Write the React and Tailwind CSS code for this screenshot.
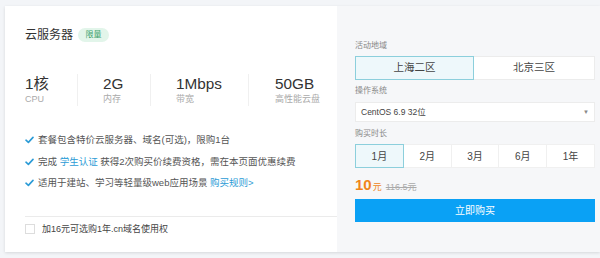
import React from "react";

const font = { fontFamily: '"Liberation Sans", "Noto Sans CJK SC", sans-serif' };

function Check() {
  return (
    <svg width="9" height="8" viewBox="0 0 9 8" className="shrink-0">
      <path d="M1 4.2 L3.4 6.4 L8 1.4" fill="none" stroke="#2b9bd6" strokeWidth="1.6" strokeLinecap="round" strokeLinejoin="round" />
    </svg>
  );
}

export default function App() {
  const months = ["1月", "2月", "3月", "6月", "1年"];
  return (
    <div className="w-[600px] h-[258px] bg-[#f3f5f8] pt-[6px] pl-[5px] overflow-hidden" style={font}>
      <div className="flex w-[595px] h-[246px] shadow-[0_1px_3px_rgba(0,0,0,0.12)]">
        {/* left */}
        <div className="w-[332px] bg-white flex flex-col pl-[20px]">
          <div className="flex items-center h-[20px] mt-[19px]">
            <span className="text-[12px] text-[#333] leading-[20px]">云服务器</span>
            <span className="ml-[5px] h-[14px] w-[31px] rounded-full bg-[#e2f5ea] text-[#3a9f69] text-[8px] flex items-center justify-center">限量</span>
          </div>
          <div className="flex mt-[29px] h-[32px]">
            <div className="w-[52px] flex flex-col">
              <span className="text-[15.3px] leading-[20px] text-[#333]">1核</span>
              <span className="text-[9px] leading-[14px] text-[#aaa] mt-[-2px]">CPU</span>
            </div>
            <div className="w-[73px] pl-[25px] border-l border-[#f0f0f0] flex flex-col">
              <span className="text-[15.3px] leading-[20px] text-[#333]">2G</span>
              <span className="text-[9px] leading-[14px] text-[#aaa] mt-[-2px]">内存</span>
            </div>
            <div className="w-[98px] pl-[25px] border-l border-[#f0f0f0] flex flex-col">
              <span className="text-[15.3px] leading-[20px] text-[#333]">1Mbps</span>
              <span className="text-[9px] leading-[14px] text-[#aaa] mt-[-2px]">带宽</span>
            </div>
            <div className="pl-[26px] border-l border-[#f0f0f0] flex flex-col">
              <span className="text-[15.3px] leading-[20px] text-[#333]">50GB</span>
              <span className="text-[9px] leading-[14px] text-[#aaa] mt-[-2px]">高性能云盘</span>
            </div>
          </div>
          <div className="flex flex-col mt-[27px] gap-[7.5px] text-[9.5px] leading-[14px] text-[#555]">
            <div className="flex items-center gap-[4px]">
              <Check />
              <span>套餐包含特价云服务器、域名(可选)，限购1台</span>
            </div>
            <div className="flex items-center gap-[4px]">
              <Check />
              <span>完成 <span className="text-[#2b9bd6]">学生认证</span> 获得2次购买价续费资格，需在本页面优惠续费</span>
            </div>
            <div className="flex items-center gap-[4px]">
              <Check />
              <span>适用于建站、学习等轻量级web应用场景 <span className="text-[#2b9bd6]">购买规则&gt;</span></span>
            </div>
          </div>
          <div className="mt-[26px] h-px bg-[#ebebeb]" />
          <div className="flex items-center mt-[5px] gap-[7px] h-[14px]">
            <span className="w-[10px] h-[10px] border border-[#ddd] bg-white" />
            <span className="text-[9px] text-[#444] leading-[14px]">加16元可选购1年.cn域名使用权</span>
          </div>
        </div>
        {/* right */}
        <div className="flex-1 bg-[#f6f7f9] pl-[18px] pr-[5px] flex flex-col">
          <div className="mt-[34px] text-[8px] leading-[12px] text-[#888]">活动地域</div>
          <div className="mt-[4px] flex h-[24px] bg-white text-[10.5px] text-[#444]">
            <div className="w-[119px] flex items-center justify-center bg-[#eef8fb] border border-[#8ccfdc]">上海二区</div>
            <div className="flex-1 flex items-center justify-center border border-l-0 border-[#ececec]">北京三区</div>
          </div>
          <div className="mt-[5px] text-[8px] leading-[12px] text-[#888]">操作系统</div>
          <div className="mt-[5px] h-[20px] bg-white border border-[#ececec] flex items-center justify-between pl-[5px] pr-[5px] text-[8.5px] text-[#444]">
            <span>CentOS 6.9 32位</span>
            <span className="text-[6px] text-[#888]">▼</span>
          </div>
          <div className="mt-[6px] text-[8px] leading-[12px] text-[#888]">购买时长</div>
          <div className="mt-[4px] flex h-[24px] bg-white text-[10px] text-[#444]">
            {months.map((m, i) => (
              <div
                key={m}
                className={
                  i === 0
                    ? "flex-1 flex items-center justify-center bg-[#eef8fb] border border-[#8ccfdc]"
                    : "flex-1 flex items-center justify-center border border-l-0 border-[#f0f0f0]"
                }
              >
                {m}
              </div>
            ))}
          </div>
          <div className="mt-[8px] flex items-baseline h-[18px]">
            <span className="text-[15px] font-bold text-[#f08519] leading-[18px]">10</span>
            <span className="text-[9px] text-[#f08519] ml-[1px]">元</span>
            <span className="text-[9px] text-[#aaa] line-through ml-[4px]">116.5元</span>
          </div>
          <div className="mt-[5px] h-[23px] bg-[#0aa1f5] flex items-center justify-center text-white text-[10px]">立即购买</div>
        </div>
      </div>
    </div>
  );
}
